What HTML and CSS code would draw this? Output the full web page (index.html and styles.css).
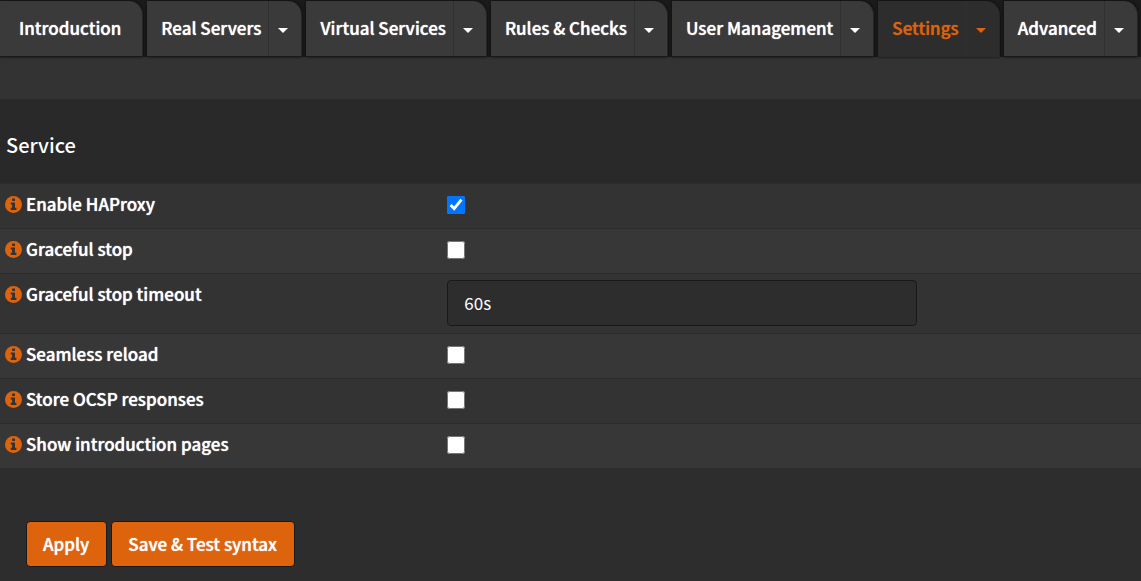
FILE: index.html
```
<!DOCTYPE html>
<html lang="en">
<head>
<meta charset="utf-8">
<title>HAProxy settings</title>
<link rel="stylesheet" href="styles.css">
</head>
<body>
<svg class="defs" aria-hidden="true">
  <symbol id="info" viewBox="0 0 16 16"><circle cx="8" cy="8" r="8" fill="#de630d"/><path d="M6.7 2.3h2.7v2.3H6.7zM5.4 6h4v5.1h1.3v2H5.4v-2h1.3V8H5.4z" fill="#333"/></symbol>
</svg>
<nav class="tabs">
  <div class="tab"><a class="tab-link solo" href="#introduction">Introduction</a></div>
  <div class="tab"><a class="tab-link" href="#servers">Real Servers</a><button class="toggle" type="button" aria-label="Real Servers menu"></button></div>
  <div class="tab"><a class="tab-link" href="#services">Virtual Services</a><button class="toggle" type="button" aria-label="Virtual Services menu"></button></div>
  <div class="tab"><a class="tab-link" href="#rules">Rules &amp; Checks</a><button class="toggle" type="button" aria-label="Rules &amp; Checks menu"></button></div>
  <div class="tab"><a class="tab-link" href="#users">User Management</a><button class="toggle" type="button" aria-label="User Management menu"></button></div>
  <div class="tab active"><a class="tab-link" href="#settings">Settings</a><button class="toggle" type="button" aria-label="Settings menu"></button></div>
  <div class="tab"><a class="tab-link" href="#advanced">Advanced</a><button class="toggle" type="button" aria-label="Advanced menu"></button></div>
</nav>
<main>
  <form>
    <h2 class="section-title">Service</h2>
    <table class="settings">
      <tbody>
        <tr><th scope="row"><label for="enable"><svg class="info"><use href="#info"/></svg>Enable HAProxy</label></th><td><input type="checkbox" id="enable" checked></td></tr>
        <tr><th scope="row"><label for="graceful"><svg class="info"><use href="#info"/></svg>Graceful stop</label></th><td><input type="checkbox" id="graceful"></td></tr>
        <tr><th scope="row"><label for="timeout"><svg class="info"><use href="#info"/></svg>Graceful stop timeout</label></th><td><input type="text" class="text" id="timeout" value="60s"></td></tr>
        <tr><th scope="row"><label for="seamless"><svg class="info"><use href="#info"/></svg>Seamless reload</label></th><td><input type="checkbox" id="seamless"></td></tr>
        <tr><th scope="row"><label for="ocsp"><svg class="info"><use href="#info"/></svg>Store OCSP responses</label></th><td><input type="checkbox" id="ocsp"></td></tr>
        <tr><th scope="row"><label for="intro"><svg class="info"><use href="#info"/></svg>Show introduction pages</label></th><td><input type="checkbox" id="intro"></td></tr>
      </tbody>
    </table>
    <div class="actions">
      <button class="btn" type="button">Apply</button>
      <button class="btn" type="button">Save &amp; Test syntax</button>
    </div>
  </form>
</main>
</body>
</html>
```
FILE: styles.css
```
* { box-sizing: border-box; }
body {
  margin: 0;
  background: #2d2d2d;
  color: #fff;
  font: 500 17px/24px "Noto Sans CJK SC", "Open Sans", sans-serif;
}
.defs { position: absolute; width: 0; height: 0; }
.tabs {
  display: flex;
  gap: 4px;
  padding-top: 1px;
  background: #1b1b1b;
  white-space: nowrap;
}
.tab {
  display: flex;
  height: 56px;
  border-right: 1px solid #262626;
  border-bottom: 1px solid #1a1a1a;
  border-top-right-radius: 14px;
  background: #3a3a3a;
  box-shadow: 0 0 3px #0a0a0a;
}
.tab-link, .settings label, .btn { text-shadow: 0 0 1px currentColor; }
.tab-link {
  padding: 15px 7px 16px 14px;
  color: #fff;
  text-decoration: none;
}
.tab-link.solo { padding-left: 19px; padding-right: 21px; }
.toggle {
  display: grid;
  place-items: center;
  width: 33px;
  padding: 4px 4px 0 0;
  border: 0;
  border-left: 1px solid #303030;
  background: none;
  color: #fff;
}
.toggle::before {
  content: "";
  border: 5px solid transparent;
  border-top-color: currentColor;
  border-bottom: 0;
}
.active { background: #2d2d2d; border-bottom-color: #2d2d2d; }
.active .tab-link, .active .toggle { color: #de630d; }
main { padding-top: 42px; background: #333; }
form { background: #2d2d2d; }
.section-title {
  margin: 0;
  padding: 34px 6px 26px;
  background: #292929;
  font-size: 20px;
  font-weight: 500;
  line-height: 24px;
}
.settings { width: 100%; border-collapse: separate; border-spacing: 0; table-layout: fixed; }
.settings tr { background: #373737; }
.settings tr:nth-child(odd) { background: #333; }
.settings th, .settings td {
  height: 45px;
  padding: 6px 8px;
  border-top: 1px solid #2c2c2c;
  vertical-align: top;
  text-align: left;
}
.settings th { width: 38.5%; padding: 8px 5px; font-weight: 500; }
.settings label { display: flex; align-items: center; gap: 4px; }
.info { width: 17px; height: 17px; }
input[type="checkbox"] {
  display: block;
  width: 18px;
  height: 18px;
  margin: 6px 0 0;
}
.text {
  display: block;
  width: 68.5%;
  height: 46px;
  margin-bottom: 1px;
  padding: 0 16px 2px;
  border: 1px solid #191919;
  border-radius: 4px;
  background: #2d2d2d;
  color: #fff;
  font: 400 17px/24px "Noto Sans CJK SC", "Open Sans", sans-serif;
}
.actions { display: flex; gap: 4px; padding: 53px 26px 14px; }
.btn {
  padding: 10px 17px 10px 16px;
  border: 1px solid #191919;
  border-radius: 4px;
  background: #de630d;
  color: #fff;
  font: inherit;
}
```
